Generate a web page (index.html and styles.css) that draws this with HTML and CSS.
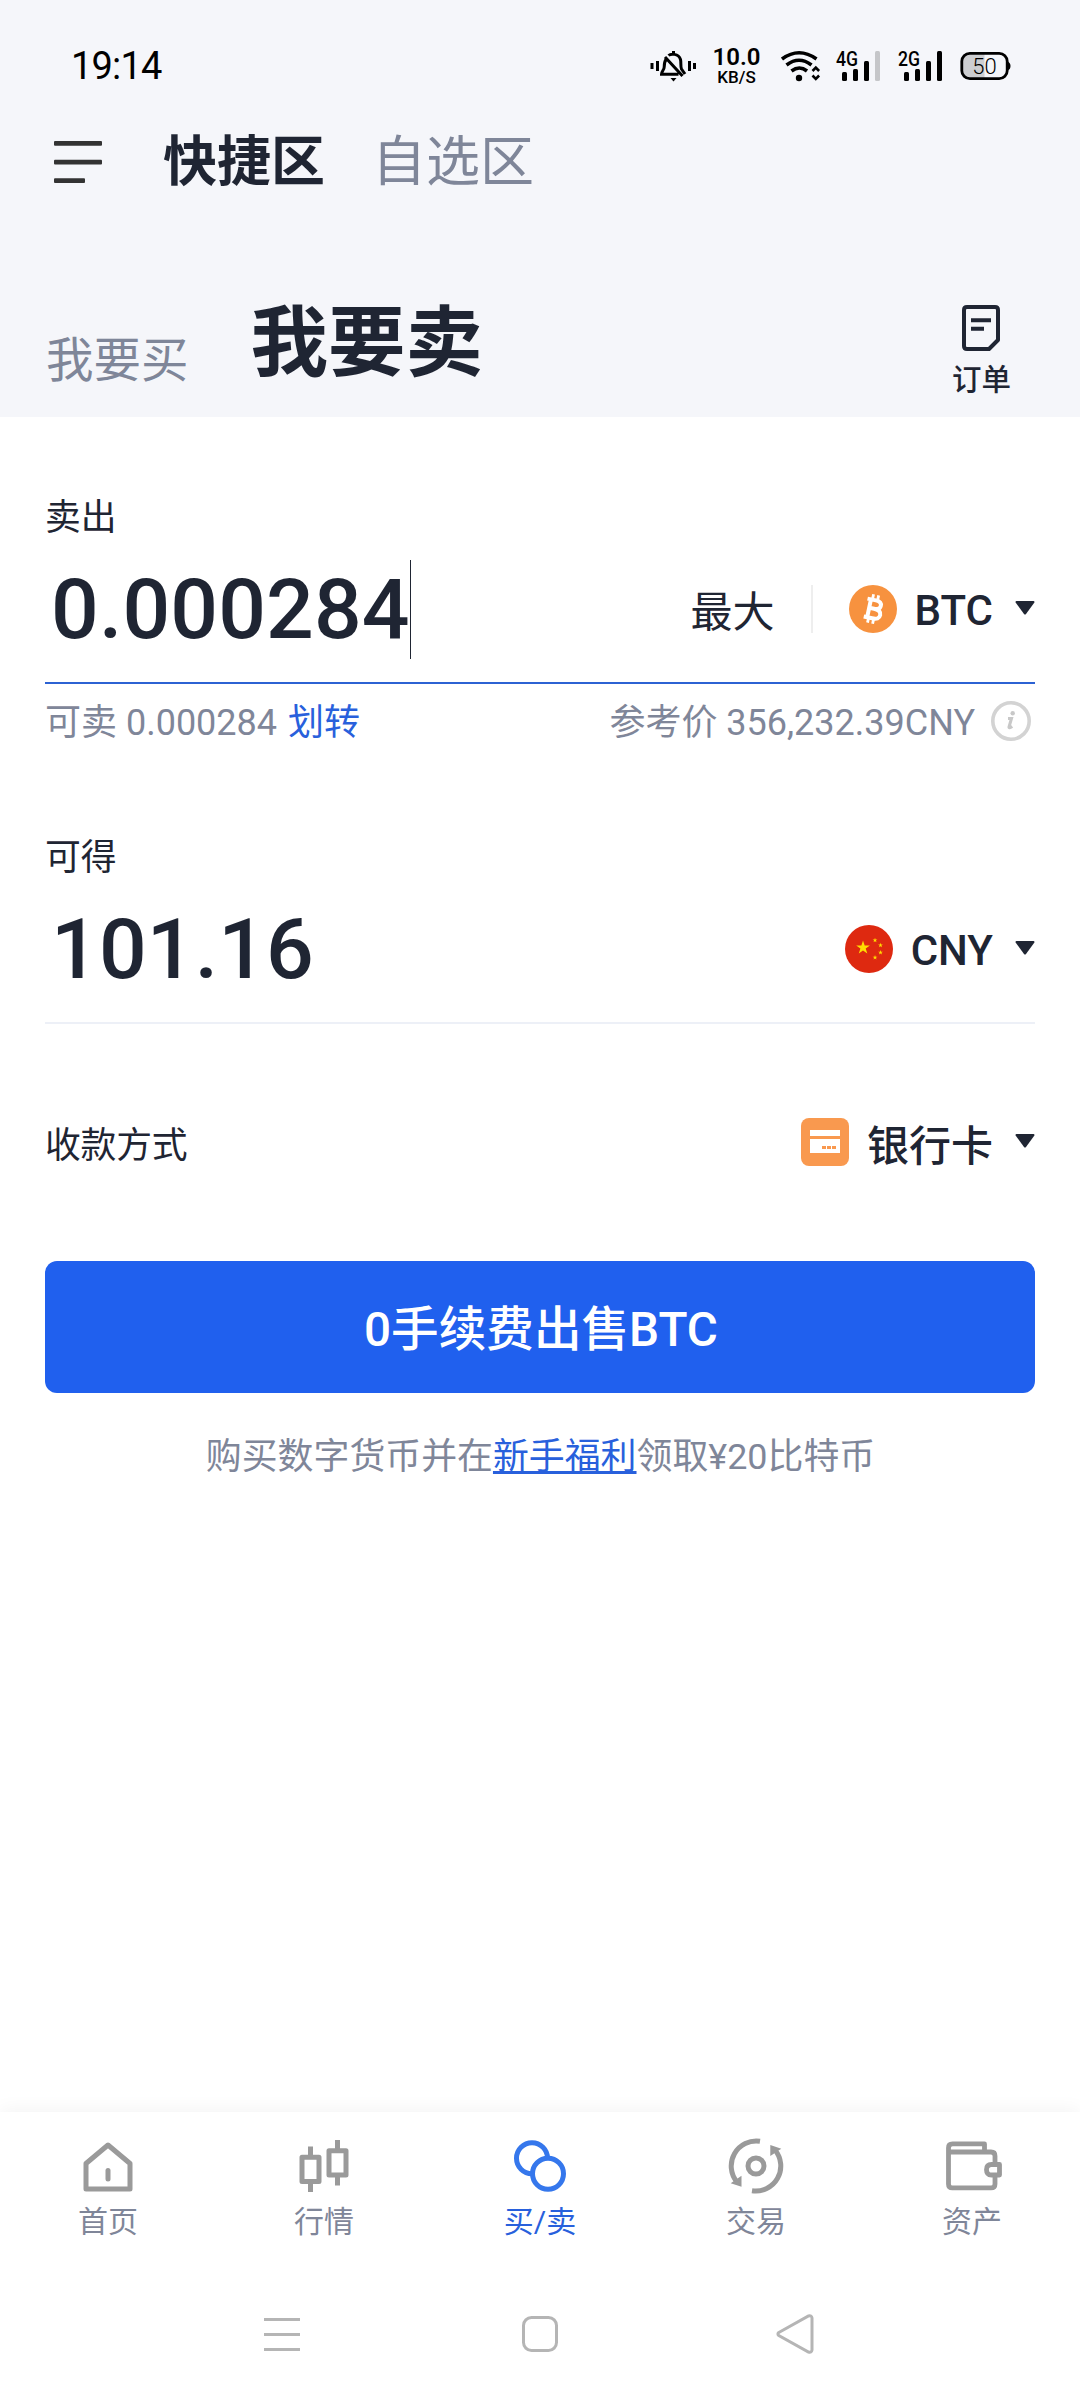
FILE: index.html
```html
<!DOCTYPE html>
<html lang="zh-CN">
<head>
<meta charset="utf-8">
<title>我要卖</title>
<link rel="stylesheet" href="styles.css">
</head>
<body>
<div class="screen">
  <header class="header">
    <div class="status">
      <span class="clock">19:14</span>
      <div class="status-icons">
        <svg class="bell" width="46" height="32" viewBox="650 50 46 32" fill="none" stroke="#000" stroke-width="3">
          <path d="M652 63v6M657.500 61v10M689.500 61v10M694.500 63v6"/>
          <path d="M666 59.500c-1.500 2-1.800 4-1.800 7.500 0 3-2.700 4-2.700 7.300h17M668.500 55.500c2-1.800 10-2.500 12 4 .8 3-.2 7 1 9.500l3.500 5M673.500 51v3M665 57l17.500 19"/>
          <path d="M670.500 78h6l-3 3.500z" fill="#000" stroke="none"/>
        </svg>
        <div class="speed"><span class="speed-num">10.0</span><span class="speed-unit">KB/S</span></div>
        <svg class="wifi" width="40" height="32" viewBox="781 50 40 32" fill="none" stroke="#000" stroke-width="3.600">
          <path d="M782 59q17-12.500 34.500 0M786.500 65q12.500-9.500 25 0M791.500 71q8-6 15.500 0"/>
          <circle cx="799" cy="78" r="3.200" fill="#000" stroke="none"/>
          <path d="M812.500 71l3.300-3.400 3.300 3.400M812.500 75.500l3.300 3.400 3.300-3.400" stroke-width="2.600"/>
        </svg>
        <svg class="signal" width="46" height="44" viewBox="835 44 46 44">
          <text x="836" y="66" textLength="22" lengthAdjust="spacingAndGlyphs">4G</text>
          <rect x="842" y="72" width="5" height="9" rx="1.500"/><rect x="853" y="69" width="5" height="12" rx="1.500"/><rect x="864" y="61" width="5" height="20" rx="1.500"/><rect x="875" y="51" width="5" height="30" rx="1.500" fill="#c5c6c9"/>
        </svg>
        <svg class="signal second" width="46" height="44" viewBox="897 44 46 44">
          <text x="898" y="66" textLength="22" lengthAdjust="spacingAndGlyphs">2G</text>
          <rect x="904" y="72" width="5" height="9" rx="1.500"/><rect x="915" y="69" width="5" height="12" rx="1.500"/><rect x="926" y="61" width="5" height="20" rx="1.500"/><rect x="937" y="51" width="5" height="30" rx="1.500"/>
        </svg>
        <svg class="battery" width="51" height="32" viewBox="960.500 50 51 32">
          <path d="M970 53.500h15v25h-15q-7 0-7-7v-11q0-7 7-7z" fill="#cdced1"/>
          <rect x="962.300" y="53.300" width="45.400" height="25.400" rx="8" fill="none" stroke="#000" stroke-width="2.800"/>
          <path d="M1008 61.500q3 1 3 4.500t-3 4.500z"/>
          <text x="985" y="73.500" text-anchor="middle">50</text>
        </svg>
      </div>
    </div>
    <nav class="zones">
      <svg class="menu" width="48" height="42" viewBox="0 0 48 42" fill="#333"><rect width="48" height="4.700" rx="1"/><rect y="18.700" width="48" height="4.700" rx="1"/><rect y="37.300" width="31" height="4.700" rx="1"/></svg>
      <span class="zone active">快捷区</span>
      <span class="zone">自选区</span>
    </nav>
    <div class="modes">
      <span class="buy">我要买</span>
      <h1 class="sell">我要卖</h1>
      <div class="orders">
        <svg width="38" height="46" viewBox="0 0 38 46" fill="none" stroke="#1f2533" stroke-width="4"><path d="M5 2h28q3 0 3 3v30l-9 9H5q-3 0-3-3V5q0-3 3-3z" stroke-linejoin="round"/><path d="M9 15.200h20M9 23.800h13"/></svg>
        <span>订单</span>
      </div>
    </div>
  </header>

  <main class="form">
    <section class="field focused">
      <div class="label">卖出</div>
      <div class="row">
        <span class="amount">0.000284</span><span class="caret"></span>
        <div class="picker">
          <span class="max">最大</span>
          <svg class="coin" width="48" height="48" viewBox="0 0 48 48"><circle cx="24" cy="24" r="24" fill="#f7923f"/><g transform="rotate(12 24 24)" fill="none" stroke="#fff"><path d="M16.500 15H25q6 0 6 4.300T25 23.600h-5M25 23.600q7.300 0 7.300 4.900T25 33.200h-8.500M20 15v18" stroke-width="4"/><path d="M21.500 9.500V15M26.700 9.500V15M21.500 33v5.500M26.700 33v5.500" stroke-width="2.800"/></g></svg>
          <span class="code">BTC</span>
          <svg class="arrow" width="20" height="14" viewBox="0 0 20 14"><path d="M1.500 0h17q1.500.4.700 1.800L11 13q-1 1.200-2 0L.8 1.800Q0 .4 1.500 0z"/></svg>
        </div>
      </div>
      <div class="hint">
        <span class="available">可卖 0.000284 <a class="transfer">划转</a></span>
        <span class="price">参考价 356,232.39CNY</span>
        <svg class="info" width="40" height="40" viewBox="0 0 40 40"><circle cx="20" cy="20" r="18.200" fill="none" stroke="#d3d3d3" stroke-width="3.600"/><circle cx="21.700" cy="12.300" r="2.200" fill="#c8c8c8"/><path d="M17 17.500h3.500L18 26q-.4 1.700 3.300-.5" fill="none" stroke="#c8c8c8" stroke-width="3"/></svg>
      </div>
    </section>

    <section class="field">
      <div class="label">可得</div>
      <div class="row">
        <span class="amount">101.16</span>
        <div class="picker">
          <svg class="flag" width="48" height="48" viewBox="0 0 48 48"><circle cx="24" cy="24" r="24" fill="#de2910"/><g fill="#ffde00"><path id="star" d="M18 15.500l1.700 5h5.200l-4.200 3.100 1.600 5-4.300-3-4.200 3 1.600-5-4.200-3.100h5.200z"/><use href="#star" transform="translate(23.700 7.200) scale(.35)"/><use href="#star" transform="translate(29.200 12.300) scale(.35)"/><use href="#star" transform="translate(29.200 19.600) scale(.35)"/><use href="#star" transform="translate(23.700 24.500) scale(.35)"/></g></svg>
          <span class="code">CNY</span>
          <svg class="arrow" width="20" height="14" viewBox="0 0 20 14"><path d="M1.500 0h17q1.500.4.700 1.800L11 13q-1 1.200-2 0L.8 1.800Q0 .4 1.500 0z"/></svg>
        </div>
      </div>
    </section>

    <section class="payment">
      <span class="label">收款方式</span>
      <div class="picker">
        <svg class="card" width="48" height="48" viewBox="0 0 48 48"><rect width="48" height="48" rx="8" fill="#f9994f"/><path d="M9 12h30v6H9zM9 21h30v14H9z" fill="#fff"/><path d="M21 28h4v3h-4zM26 28h4v3h-4zM31 28h4v3h-4z" fill="#f9994f"/></svg>
        <span class="code bank">银行卡</span>
        <svg class="arrow" width="20" height="14" viewBox="0 0 20 14"><path d="M1.500 0h17q1.500.4.700 1.800L11 13q-1 1.200-2 0L.8 1.800Q0 .4 1.500 0z"/></svg>
      </div>
    </section>

    <button class="submit">0手续费出售BTC</button>
    <p class="promo">购买数字货币并在<a class="promo-link">新手福利</a>领取¥20比特币</p>
  </main>

  <nav class="tabs">
    <div class="tab">
      <svg width="60" height="60" viewBox="78 2136 60 60" fill="none" stroke="#9a9a9a" stroke-width="5" stroke-linejoin="round"><path d="M86 2163.500l22-18.500 22 18.500v25.500H86z"/><path d="M108 2170.500v8.500" stroke-linecap="round"/></svg>
      <span>首页</span>
    </div>
    <div class="tab">
      <svg width="60" height="60" viewBox="294 2136 60 60" fill="none" stroke="#9a9a9a" stroke-width="5" stroke-linejoin="round"><path d="M302 2157.200h17v24.300h-17zM310.500 2146.500v9M310.500 2183v9M329 2150.700h17v24.300h-17zM337.500 2140v9M337.500 2177v8.500"/></svg>
      <span>行情</span>
    </div>
    <div class="tab current">
      <svg width="60" height="60" viewBox="510 2136 60 60" fill="none" stroke="#3577ec" stroke-width="5"><circle cx="532" cy="2158.200" r="15.500"/><circle cx="548" cy="2173.800" r="15.500" fill="#fff"/></svg>
      <span>买/卖</span>
    </div>
    <div class="tab">
      <svg width="60" height="60" viewBox="726 2136 60 60" fill="none" stroke="#9a9a9a" stroke-width="5"><circle cx="756" cy="2166" r="8"/><path d="M760 2141.300A25 25 0 0 0 737 2182M752 2190.700A25 25 0 0 0 775 2150"/><path d="M730.700 2183.300l10.800-7.500v11zM781.300 2148.700l-11-3.700v11z" fill="#9a9a9a" stroke="none"/></svg>
      <span>交易</span>
    </div>
    <div class="tab">
      <svg width="60" height="60" viewBox="942 2136 60 60" fill="none" stroke="#9a9a9a" stroke-width="4.800" stroke-linejoin="round"><path d="M984.500 2151.500v-7.600h-32q-4 0-4 4v36q0 4 4 4h38.500q4 0 4-4v-9M948.500 2152h42.500q4 0 4 4v8M999.500 2164.500h-8q-5 0-5 5.200t5 5.300h8z"/></svg>
      <span>资产</span>
    </div>
  </nav>
  <footer class="system">
    <svg width="36" height="40" viewBox="0 0 36 40" stroke="#b5b5b5" stroke-width="3"><path d="M0 5.500h36M0 20.500h36M0 35.500h36"/></svg>
    <svg class="home" width="36" height="40" viewBox="0 0 36 40" fill="none" stroke="#b5b5b5" stroke-width="3"><rect x="1.500" y="3.500" width="33" height="33" rx="8"/></svg>
    <svg width="38" height="40" viewBox="0 0 38 40" fill="none" stroke="#b5b5b5" stroke-width="3"><path d="M2.800 18.500L32.500 2q3-1 3.500 2v32q-.5 3-3.500 2L2.800 21.500q-1.800-1.500 0-3z"/></svg>
  </footer>
</div>
</body>
</html>
```
FILE: styles.css
```css
* { box-sizing: border-box; }
body {
  margin: 0;
  background: #fff;
  color: #1f2533;
  font-family: Roboto, "Noto Sans CJK SC", sans-serif;
}
svg { display: block; flex: none; }
.screen { width: 1080px; height: 2400px; display: flex; flex-direction: column; }

.header { height: 417px; background: #f5f6fa; }
.status { height: 132px; padding: 0 69px 0 71px; display: flex; align-items: center; justify-content: space-between; color: #000; }
.clock { font-size: 38px; line-height: 44px; letter-spacing: -.8px; }
.status-icons { display: flex; align-items: center; }
.speed { width: 48px; margin: 0 20px 0 17px; padding-top: 2px; display: flex; flex-direction: column; align-items: center; }
.speed-num { font-size: 24px; line-height: 20px; font-weight: 600; }
.speed-unit { font-size: 17px; line-height: 20px; font-weight: 500; }
.wifi { margin-right: 14px; }
.signal { margin-right: 16px; }
.signal.second { margin-right: 17.500px; }
.signal text { font-size: 20px; font-weight: 500; }
.battery text { font-size: 22px; font-weight: 300; }

.zones { height: 60px; padding-left: 54px; display: flex; align-items: center; }
.menu { margin-right: 61px; }
.zone { font-size: 54px; line-height: 60px; padding-top: 2px; color: #7f8699; margin-right: 47px; }
.zone.active { font-weight: 700; color: #1f2533; }

.modes { height: 225px; padding: 0 69px 0 46px; display: flex; align-items: flex-end; }
.buy { font-size: 47.500px; line-height: 60px; color: #7f8699; margin-bottom: 26px; }
.sell { font-size: 77.500px; line-height: 90px; font-weight: 700; margin: 0 0 28px 62px; }
.orders { margin: 0 0 19px auto; display: flex; flex-direction: column; align-items: center; gap: 11px; font-size: 29.500px; line-height: 36px; font-weight: 500; }

.form { flex: 1; padding: 75px 45px 0; display: flex; flex-direction: column; }
.label { font-size: 35.800px; line-height: 48px; padding-top: 2px; height: 48px; }
.row { height: 144px; padding-bottom: 4px; border-bottom: 2px solid #edf0f7; display: flex; align-items: center; }
.focused .row { border-color: #2c62d3; }
.amount { font-size: 84px; line-height: 100px; font-weight: 500; letter-spacing: .15px; padding: 2px 0 0 6px; }
.caret { width: 1px; height: 99px; background: #1f2533; }
.picker { margin-left: auto; display: flex; align-items: center; }
.max { font-size: 42px; height: 48px; line-height: 43px; padding: 6px 36px 0 0; border-right: 2px solid #eee; margin-right: 36px; }
.code { font-size: 42px; line-height: 48px; font-weight: 500; padding-top: 4px; margin: 0 22px 0 18px; }
.bank { padding-top: 9px; }
.arrow { fill: #1f2533; margin-bottom: 2px; }
.hint { height: 74px; margin-bottom: 74px; padding-right: 4px; display: flex; align-items: center; font-size: 36px; line-height: 48px; color: #7f8699; }
.available, .price { padding-top: 4px; }
.transfer { color: #2860dc; margin-left: 2px; }
.price { margin-left: auto; }
.info { margin: 0 0 1px 16px; }
.payment { height: 100px; margin: 68px 0 69px; display: flex; align-items: center; }
.payment .label { height: auto; padding-top: 8px; letter-spacing: -.2px; }
.submit { height: 132px; border: 0; border-radius: 12px; padding: 5px 0 0 2px; background: #2060ee; color: #fff; font: 500 47.600px/60px Roboto, "Noto Sans CJK SC", sans-serif; }
.promo { margin: 40px 0 0; padding-left: 1px; text-align: center; font-size: 35.900px; line-height: 48px; color: #7f8699; }
.promo-link { color: #2860dc; text-decoration: underline; }

.tabs { height: 158px; padding-top: 24px; display: flex; background: #fff; box-shadow: 0 -2px 18px rgba(0, 0, 0, .05); }
.tab { flex: 1; display: flex; flex-direction: column; align-items: center; gap: 8px; font-size: 30px; line-height: 36px; color: #7f8699; }
.current { color: #2860dc; }
.system { height: 130px; padding: 44px 0 0 264px; display: flex; background: #fff; }
.home { margin: 0 218px 0 222px; }
```
